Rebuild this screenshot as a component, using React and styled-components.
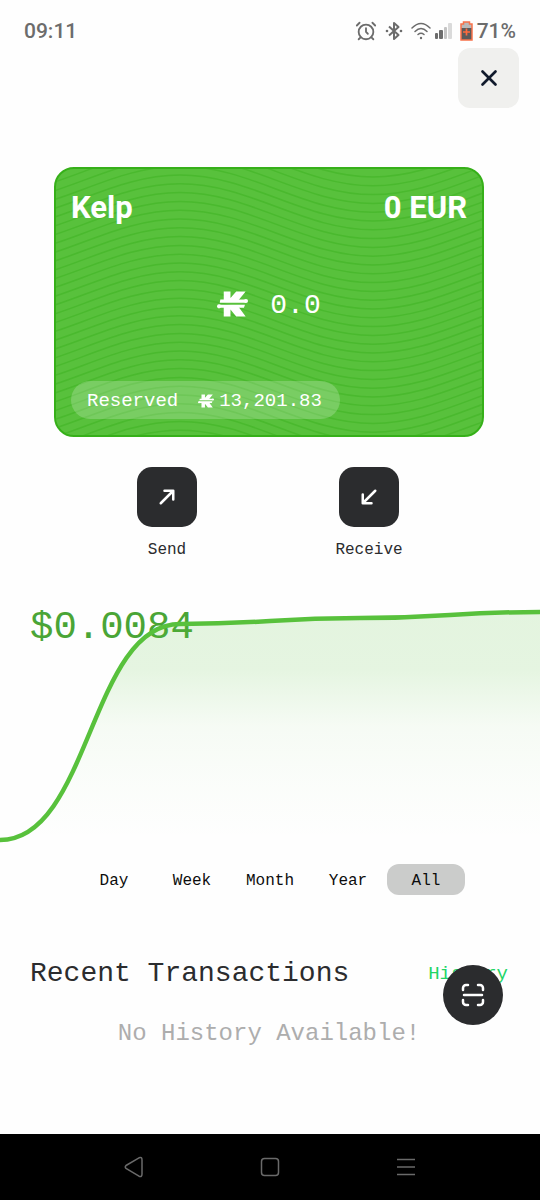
import { useState } from 'react';
import styled, { createGlobalStyle } from 'styled-components';
import { AlarmClock, X } from 'lucide-react';

const GlobalStyle = createGlobalStyle`
  * {
    box-sizing: border-box;
  }

  body {
    margin: 0;
    background: #fefefe;
    font-family: "Liberation Mono", monospace;
    color: #2b2c2e;
  }

  button {
    border: 0;
    padding: 0;
    font: inherit;
    color: inherit;
    background: none;
    cursor: pointer;
  }

  svg {
    display: block;
    flex-shrink: 0;
  }
`;

const Screen = styled.div`
  display: flex;
  flex-direction: column;
  min-height: 100vh;
`;

const StatusBar = styled.header`
  display: flex;
  align-items: center;
  justify-content: space-between;
  padding: 14px 24px 0;
  font-family: Roboto, sans-serif;
  font-size: 21px;
  font-weight: 500;
  line-height: 34px;
  color: #6c6c6c;
`;

const StatusIcons = styled.div`
  display: flex;
  align-items: center;
  gap: 8px;
`;

const IconPair = styled.span`
  display: flex;
  align-items: center;
  gap: 4px;
`;

const CloseRow = styled.div`
  display: flex;
  justify-content: flex-end;
  padding: 0 21px;
`;

const CloseButton = styled.button`
  display: grid;
  place-items: center;
  width: 61px;
  height: 60px;
  border-radius: 12px;
  background: #f0f0ee;
  color: #111a2c;
`;

const Card = styled.section`
  position: relative;
  display: flex;
  flex-direction: column;
  justify-content: space-between;
  min-height: 270px;
  margin: 59px 56px 0 54px;
  padding: 21px 15px 16px;
  overflow: hidden;
  border: 2px solid #36b019;
  border-radius: 20px;
  background: #58c13c;
  color: #fff;
`;

const CardWaves = styled.svg`
  position: absolute;
  inset: 0;
  width: 100%;
  height: 100%;
`;

const CardRow = styled.div`
  position: relative;
  display: flex;
  align-items: center;
  justify-content: space-between;
  font-family: Roboto, sans-serif;
  font-size: 31px;
  font-weight: 700;
  line-height: 36px;
`;

const Balance = styled.div`
  position: relative;
  display: flex;
  align-items: center;
  justify-content: center;
  gap: 22px;
  font-size: 28px;
  line-height: 32px;
`;

const BalanceAmount = styled.span`
  padding-top: 4px;
`;

const Reserved = styled.div`
  position: relative;
  display: flex;
  align-items: center;
  align-self: flex-start;
  height: 38px;
  padding: 2px 18px 0 16px;
  border-radius: 19px;
  background: rgba(255, 255, 255, 0.2);
  font-size: 19px;
`;

const ReservedLabel = styled.span`
  margin-right: 20px;
`;

const ReservedAmount = styled.span`
  display: flex;
  align-items: center;
  gap: 5px;
`;

const Actions = styled.div`
  display: flex;
  margin-top: 30px;
  padding: 0 70px 0 66px;
`;

const Action = styled.button`
  display: flex;
  flex: 1;
  flex-direction: column;
  align-items: center;
  gap: 13px;
  font-size: 16px;
  line-height: 20px;
`;

const ActionIcon = styled.span`
  display: grid;
  place-items: center;
  width: 60px;
  height: 60px;
  border-radius: 15px;
  background: #2b2c2e;
  color: #fff;
`;

const Chart = styled.section`
  position: relative;
  margin-top: 40px;
`;

const Price = styled.div`
  position: absolute;
  top: 6px;
  left: 30px;
  font-size: 39px;
  line-height: 44px;
  color: #4aa536;
`;

const ChartSvg = styled.svg`
  position: relative;
  width: 100%;
  height: 250px;
`;

const Periods = styled.div`
  display: flex;
  justify-content: center;
  margin-top: 14px;
`;

const Period = styled.button`
  width: 78px;
  height: 31px;
  padding-top: 2px;
  border-radius: 12px;
  background: ${({ $active }) => ($active ? '#cbcccb' : 'transparent')};
  font-size: 16px;
  color: #0c0c0c;
`;

const Recent = styled.section`
  position: relative;
  margin-top: 59px;
  padding: 0 32px 0 30px;
`;

const RecentHeader = styled.div`
  display: flex;
  align-items: center;
  justify-content: space-between;
`;

const Title = styled.h2`
  margin: 0;
  font-size: 28px;
  font-weight: 400;
  line-height: 40px;
`;

const HistoryLink = styled.a`
  font-size: 19px;
  color: #1fd566;
  text-decoration: none;
`;

const Empty = styled.p`
  margin: 25px 0 0;
  font-size: 24px;
  line-height: 30px;
  text-align: center;
  color: #adadad;
`;

const ScanButton = styled.button`
  position: absolute;
  top: 11px;
  right: 37px;
  display: grid;
  place-items: center;
  width: 60px;
  height: 60px;
  border-radius: 50%;
  background: #2b2c2e;
  color: #fff;
`;

const NavBar = styled.nav`
  display: flex;
  margin-top: auto;
  padding: 0 66px;
  background: #000;
  color: #6a6a6a;
`;

const NavButton = styled.button`
  display: grid;
  flex: 1;
  place-items: center;
  height: 66px;
`;

function KelpIcon({ width, height }) {
  return (
    <svg width={width} height={height} viewBox="0 0 92 76" fill="currentColor" aria-hidden="true">
      <path d="M20 1H40V20L57 1H85L62 29H20Z" />
      <path d="M20 44H62L85 75H57L40 54V75H20Z" />
      <path d="M10 25H86V34H8Z" />
      <path d="M5 40H83L80 49H5Z" />
      <circle cx="86" cy="29" r="6" />
      <circle cx="6" cy="45" r="6" />
    </svg>
  );
}

function BluetoothIcon() {
  return (
    <svg width="18" height="20" viewBox="0 0 18 20" fill="none" stroke="currentColor" strokeWidth="2">
      <path d="M4 5.500L13.500 14L9 18V2L13.500 6L4 14.500" strokeLinejoin="round" />
      <circle cx="2" cy="10" r="1.300" fill="currentColor" stroke="none" />
      <circle cx="16" cy="10" r="1.300" fill="currentColor" stroke="none" />
    </svg>
  );
}

function WifiIcon() {
  return (
    <svg width="20" height="18" viewBox="0 0 20 18" fill="none" stroke="currentColor" strokeWidth="1.500" strokeLinecap="round">
      <path d="M1 6Q10 -3 19 6" />
      <path d="M4 9.500Q10 3.500 16 9.500" />
      <path d="M7 12.500Q10 10 13 12.500" />
      <circle cx="10" cy="16" r="1.200" fill="currentColor" stroke="none" />
    </svg>
  );
}

function SignalIcon() {
  return (
    <svg width="17" height="16" viewBox="0 0 17 16" fill="currentColor">
      <rect x="0" y="10" width="3" height="6" rx="1" />
      <rect x="4" y="7" width="4" height="9" rx="1" />
      <rect x="9" y="4" width="3" height="12" rx="1" fill="#c4c4c4" />
      <rect x="13" y="0" width="4" height="16" rx="1" fill="#dadada" />
    </svg>
  );
}

function BatteryIcon() {
  return (
    <svg width="13" height="20" viewBox="0 0 13 20">
      <path d="M1 3H3.500V1H9.500V3H12V19H1Z" fill="#b9b9b9" />
      <path d="M1 7H12V19H1Z" fill="#5a5a5a" />
      <path d="M1 3H3.500V1H9.500V3H12V19H1Z" fill="none" stroke="#f87149" strokeWidth="1.500" />
      <path d="M6.500 7.500V14.500M3 11H10" stroke="#ff6a3c" strokeWidth="1.700" />
    </svg>
  );
}

function ArrowIcon({ d }) {
  return (
    <svg width="30" height="30" viewBox="0 0 24 24" fill="none" stroke="currentColor" strokeWidth="2" strokeLinecap="round" strokeLinejoin="round">
      <path d={d} />
    </svg>
  );
}

function ScanIcon() {
  return (
    <svg width="24" height="24" viewBox="0 0 24 24" fill="none" stroke="currentColor" strokeWidth="2.500" strokeLinecap="round" strokeLinejoin="round">
      <path d="M7 2H5A3 3 0 0 0 2 5V7M17 2H19A3 3 0 0 1 22 5V7M22 17V19A3 3 0 0 1 19 22H17M7 22H5A3 3 0 0 1 2 19V17M3 12H21" />
    </svg>
  );
}

const waves = Array.from({ length: 38 }, (_, i) => -38 + i * 8.8);

const periods = ['Day', 'Week', 'Month', 'Year', 'All'];

const linePath = 'M0 240C90 240 90 24 180 24C270 24 270 18 360 18C450 18 450 12 540 12';

export default function App() {
  const [period, setPeriod] = useState('All');

  return (
    <>
      <GlobalStyle />
      <Screen>
        <StatusBar>
          <span>09:11</span>
          <StatusIcons>
            <AlarmClock size={22} strokeWidth={2} />
            <BluetoothIcon />
            <IconPair>
              <WifiIcon />
              <SignalIcon />
            </IconPair>
            <IconPair>
              <BatteryIcon />
              <span>71%</span>
            </IconPair>
          </StatusIcons>
        </StatusBar>

        <main>
          <CloseRow>
            <CloseButton aria-label="Close">
              <X size={26} strokeWidth={2.5} />
            </CloseButton>
          </CloseRow>

          <Card>
            <CardWaves viewBox="0 0 426 266" preserveAspectRatio="xMidYMid slice" fill="none" stroke="#4ab92e" strokeWidth="1.500">
              {waves.map((y) => (
                <path
                  key={y}
                  transform={`translate(0 ${y})`}
                  d="M-69 46C1 46 54 0 124 0S247 46 317 46S440 0 510 0"
                />
              ))}
            </CardWaves>
            <CardRow>
              <span>Kelp</span>
              <span>0 EUR</span>
            </CardRow>
            <Balance>
              <KelpIcon width={31} height={26} />
              <BalanceAmount>0.0</BalanceAmount>
            </Balance>
            <Reserved>
              <ReservedLabel>Reserved</ReservedLabel>
              <ReservedAmount>
                <KelpIcon width={16} height={14} />
                13,201.83
              </ReservedAmount>
            </Reserved>
          </Card>

          <Actions>
            <Action>
              <ActionIcon>
                <ArrowIcon d="M7 17L17 7M10 7H17V14" />
              </ActionIcon>
              Send
            </Action>
            <Action>
              <ActionIcon>
                <ArrowIcon d="M17 7L7 17M7 10V17H14" />
              </ActionIcon>
              Receive
            </Action>
          </Actions>

          <Chart>
            <Price>$0.0084</Price>
            <ChartSvg viewBox="0 0 540 250" preserveAspectRatio="none" fill="none">
              <defs>
                <linearGradient id="area" gradientUnits="userSpaceOnUse" x1="0" y1="12" x2="0" y2="240">
                  <stop offset="0" stopColor="#58c13c" stopOpacity="0.16" />
                  <stop offset="0.25" stopColor="#58c13c" stopOpacity="0.15" />
                  <stop offset="0.5" stopColor="#58c13c" stopOpacity="0.05" />
                  <stop offset="0.75" stopColor="#58c13c" stopOpacity="0.02" />
                  <stop offset="1" stopColor="#58c13c" stopOpacity="0" />
                </linearGradient>
              </defs>
              <path d={`${linePath}V240Z`} fill="url(#area)" />
              <path d={linePath} stroke="#58c13c" strokeWidth="4.500" vectorEffect="non-scaling-stroke" />
            </ChartSvg>
          </Chart>

          <Periods>
            {periods.map((name) => (
              <Period key={name} $active={name === period} onClick={() => setPeriod(name)}>
                {name}
              </Period>
            ))}
          </Periods>

          <Recent>
            <RecentHeader>
              <Title>Recent Transactions</Title>
              <HistoryLink href="#history">History</HistoryLink>
            </RecentHeader>
            <Empty>No History Available!</Empty>
            <ScanButton aria-label="Scan">
              <ScanIcon />
            </ScanButton>
          </Recent>
        </main>

        <NavBar>
          <NavButton aria-label="Back">
            <svg width="20" height="22" viewBox="0 0 20 22" fill="none" stroke="currentColor" strokeWidth="1.500">
              <path d="M2 9.500L15 1.800Q18 0.500 18 4V18Q18 21.500 15 20.200L2 12.500Q0.500 11 2 9.500Z" />
            </svg>
          </NavButton>
          <NavButton aria-label="Home">
            <svg width="20" height="20" viewBox="0 0 20 20" fill="none" stroke="currentColor" strokeWidth="1.500">
              <rect x="1.500" y="1.500" width="17" height="17" rx="3" />
            </svg>
          </NavButton>
          <NavButton aria-label="Menu">
            <svg width="18" height="18" viewBox="0 0 18 18" stroke="currentColor" strokeWidth="1.500">
              <path d="M0 1.500H18M0 9H18M0 16.500H18" />
            </svg>
          </NavButton>
        </NavBar>
      </Screen>
    </>
  );
}
